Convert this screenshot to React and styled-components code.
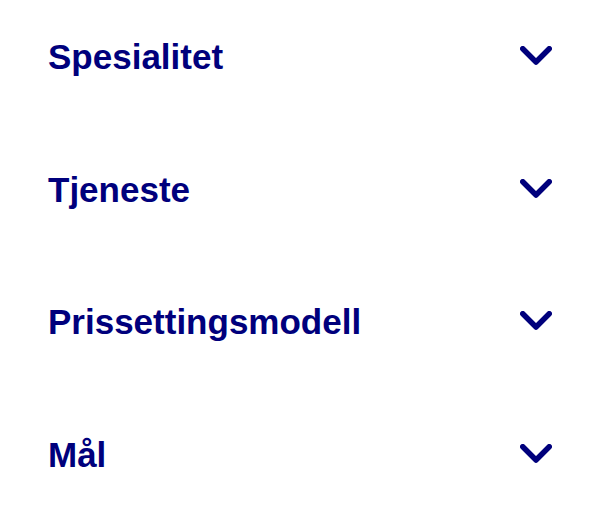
import React from "react";
import styled, { createGlobalStyle } from "styled-components";

const Global = createGlobalStyle`
  html, body { margin: 0; padding: 0; background: #ffffff; }
  body { font-family: "Liberation Sans", Arial, sans-serif; }
`;

const List = styled.div`
  display: flex;
  flex-direction: column;
  gap: 92.5px;
  padding: 37px 48px 0 48px;
`;

const Row = styled.button`
  display: flex;
  align-items: center;
  justify-content: space-between;
  width: 100%;
  height: 40px;
  padding: 0;
  border: 0;
  background: transparent;
  cursor: pointer;
  color: #00007c;
  font-family: "Liberation Sans", Arial, sans-serif;
`;

const Title = styled.span`
  font-size: 35px;
  line-height: 40px;
  font-weight: 700;
  letter-spacing: 0;
`;

const Chevron = styled.svg`
  width: 32px;
  height: 19px;
  margin-bottom: 3px;
  flex: none;
`;

const items = ["Spesialitet", "Tjeneste", "Prissettingsmodell", "Mål"];

export default function App() {
  return (
    <>
      <Global />
      <List>
        {items.map((t) => (
          <Row key={t} type="button">
            <Title>{t}</Title>
            <Chevron viewBox="0 0 32 19" aria-hidden="true">
              <polyline
                points="2.75,2.75 16,16 29.25,2.75"
                fill="none"
                stroke="currentColor"
                strokeWidth="5.5"
                strokeLinecap="round"
                strokeLinejoin="round"
              />
            </Chevron>
          </Row>
        ))}
      </List>
    </>
  );
}
